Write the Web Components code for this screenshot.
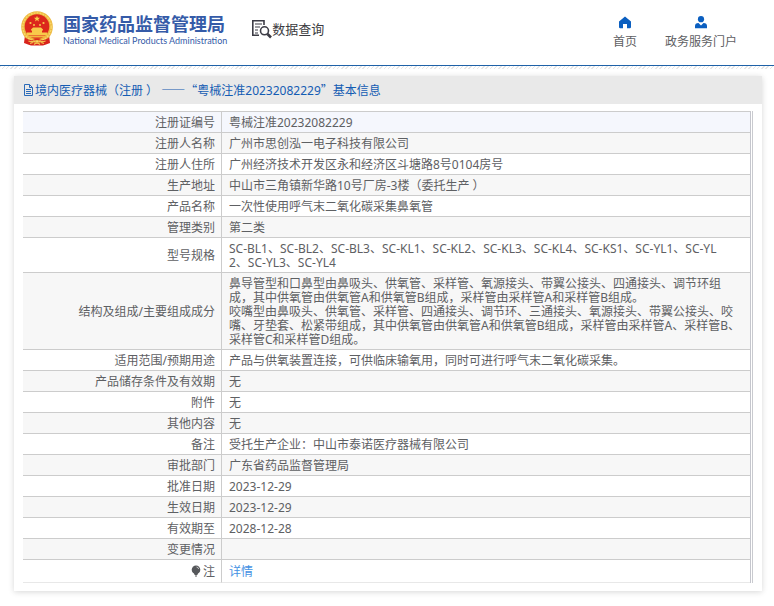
<!DOCTYPE html>
<html lang="zh-CN">
<head>
<meta charset="utf-8">
<title>国家药品监督管理局 数据查询</title>
<style>
body { margin: 0; background: #fff; color: #5e6063; font: 12px/14px "Noto Sans", "Noto Sans CJK SC", sans-serif; }
</style>
</head>
<body>
<site-header>
  <nav-item href="#home" slot="nav"><svg slot="icon" width="14" height="13" viewBox="0 0 14 13"><path fill="#0b5fc0" d="M7 0.600 13 5.500V11q0 1.200-1.200 1.200H9V8H5v4.200H2.200Q1 12.200 1 11V5.500Z"/></svg>首页</nav-item>
  <nav-item href="#portal" slot="nav"><svg slot="icon" width="14" height="13" viewBox="0 0 14 13"><circle cx="7" cy="3.200" r="3.100" fill="#0b5fc0"/><path fill="#0b5fc0" d="M1 12.300V10q0-3 3.500-3L7 9.500 9.500 7Q13 7 13 10v2.300Z"/></svg>政务服务门户</nav-item>
</site-header>
<info-card>
  <span slot="title">境内医疗器械（注册 ） <q-mark>——“</q-mark>粤械注准20232082229<q-mark>”</q-mark>基本信息</span>
  <record-table></record-table>
</info-card>

<script>
function define(name, html, setup) {
  const template = document.createElement('template');
  template.innerHTML = html;
  customElements.define(name, class extends HTMLElement {
    constructor() {
      super();
      this.attachShadow({ mode: 'open' }).append(template.content.cloneNode(true));
    }
    connectedCallback() { if (setup) setup(this, this.shadowRoot); }
  });
}

define('q-mark', `<style>:host { font-family: "Noto Sans CJK SC", sans-serif; }</style><slot></slot>`);

define('state-emblem', `
<style>:host { display: block; width: 34px; height: 36px; } svg { display: block; }</style>
<svg width="34" height="36" viewBox="0 0 34 36" role="img" aria-label="国徽">
  <path d="M5 24 4 32l4 1.500L11 34.500h12l3-1L30 32l-1-8Z" fill="#d8231c"/>
  <circle cx="17" cy="16" r="15.800" fill="#edb83e"/>
  <circle cx="17" cy="16" r="14.200" fill="none" stroke="#f7d56a" stroke-width="1.500" stroke-dasharray="2 1"/>
  <circle cx="17" cy="15.500" r="12.300" fill="#dc261c"/>
  <path fill="#f8d34c" d="m17 4.700.8 2.100h2.200l-1.700 1.400.6 2.200-1.900-1.300-1.900 1.300.6-2.200L14 6.800h2.200Z"/>
  <g fill="#f8c94a"><circle cx="10.500" cy="12" r="1.100"/><circle cx="14" cy="14" r="1"/><circle cx="20" cy="14" r="1"/><circle cx="23.500" cy="12" r="1.100"/>
  <path d="M11 18.500 13 16.500h8l2 2v1h-1v2h5v3H7v-3h5v-2h-1Z"/></g>
  <path d="M8 25h18v1.500H8Z" fill="#f3b73e"/>
  <path d="M6 27q5 3.500 8 1.500 3-2 6 0 3 2 8-1.500l-1 3q-4 2-7 0-3-2-6 0-3 2-7 0Z" fill="#da2b20"/>
  <path d="M8.500 30q3.500 1.500 6-.5M25.500 30q-3.500 1.500-6-.5M10 32.500l3-1M24 32.500l-3-1M14 33.500q3-3 6 0" stroke="#f3c04c" stroke-width="1.300" fill="none"/>
</svg>`);

define('nav-item', `
<style>
:host { display: block; }
a { display: flex; flex-direction: column; align-items: center; gap: 5px; color: inherit; text-decoration: none; line-height: 16px; }
::slotted(svg) { display: block; }
</style>
<a><slot name="icon"></slot><span><slot></slot></span></a>`, (host, root) => {
  root.querySelector('a').href = host.getAttribute('href');
});

define('site-header', `
<style>
:host { display: block; background: #fff; border-bottom: 1px solid #1f62a8; }
header { display: flex; align-items: flex-start; padding: 11px 37px 0 20px; min-height: 54px; }
.brand { display: flex; gap: 9px; color: #355ba8; text-decoration: none; }
.name { display: flex; flex-direction: column; padding-top: 1px; }
.name b { font-size: 18px; line-height: 22px; font-family: "Noto Sans CJK SC", sans-serif; }
.name small { font: 400 9px/14px Lato, sans-serif; }
.query { display: flex; align-items: center; margin: 7px 0 0 24px; color: #3b3b40; font-size: 13px; line-height: 20px; font-weight: 400; }
nav { display: flex; gap: 28px; margin: 5px 0 0 auto; }
h2 { margin: 0; }
</style>
<header>
  <a class="brand" href="#nmpa"><state-emblem></state-emblem><span class="name"><b>国家药品监督管理局</b><small>National Medical Products Administration</small></span></a>
  <h2 class="query"><svg width="21" height="21" viewBox="0 0 21 21" fill="none" stroke="#3c3c46" stroke-width="1.600"><path d="M8 17.200H1.800V2.800H13V7"/><path d="M4 6h7M4 9h5M4 12h3M4 15h3" stroke-width="1.100"/><circle cx="13.500" cy="12.800" r="4"/><path d="m16.500 16 3.500 3.500" stroke-width="2.600"/></svg>数据查询</h2>
  <nav><slot name="nav"></slot></nav>
</header>`);

define('info-card', `
<style>
:host { display: block; padding: 10px 12px 14px 14px; background: repeating-linear-gradient(135deg, #e6e6e6 0 1px, #fff 1px 3px) top / 100% 3px no-repeat; }
section { background: #fff; box-shadow: 0 1px 6px rgba(0,0,0,.16); }
h1 { display: flex; align-items: center; margin: 0; padding: 0 9px; height: 28px; background: #e9e9e9; color: #145cb3; font-size: 12px; font-weight: 400; }
svg { margin-right: 1px; }
.body { padding: 7px 9px 8px; }
</style>
<section>
  <h1><svg width="11" height="12" viewBox="0 0 11 12" fill="none" stroke="#2b6bb8"><path d="M1.500.5h5l3 3v8h-8ZM6.500.5v3h3M3 5.500h5M3 7.500h5M3 9.500h5"/></svg><slot name="title"></slot></h1>
  <div class="body"><slot></slot></div>
</section>`);

const records = [
  ['注册证编号', '粤械注准20232082229'],
  ['注册人名称', '广州市思创泓一电子科技有限公司'],
  ['注册人住所', '广州经济技术开发区永和经济区斗塘路8号0104房号'],
  ['生产地址', '中山市三角镇新华路10号厂房-3楼（委托生产 ）'],
  ['产品名称', '一次性使用呼气末二氧化碳采集鼻氧管'],
  ['管理类别', '第二类'],
  ['型号规格', 'SC-BL1、SC-BL2、SC-BL3、SC-KL1、SC-KL2、SC-KL3、SC-KL4、SC-KS1、SC-YL1、SC-YL\n2、SC-YL3、SC-YL4'],
  ['结构及组成/主要组成成分', '鼻导管型和口鼻型由鼻吸头、供氧管、采样管、氧源接头、带翼公接头、四通接头、调节环组成，其中供氧管由供氧管A和供氧管B组成，采样管由采样管A和采样管B组成。\n咬嘴型由鼻吸头、供氧管、采样管、四通接头、调节环、三通接头、氧源接头、带翼公接头、咬嘴、牙垫套、松紧带组成，其中供氧管由供氧管A和供氧管B组成，采样管由采样管A、采样管B、采样管C和采样管D组成。'],
  ['适用范围/预期用途', '产品与供氧装置连接，可供临床输氧用，同时可进行呼气末二氧化碳采集。'],
  ['产品储存条件及有效期', '无'],
  ['附件', '无'],
  ['其他内容', '无'],
  ['备注', '受托生产企业：中山市泰诺医疗器械有限公司'],
  ['审批部门', '广东省药品监督管理局'],
  ['批准日期', '2023-12-29'],
  ['生效日期', '2023-12-29'],
  ['有效期至', '2028-12-28'],
  ['变更情况', '']
];

define('record-table', `
<style>
:host { display: block; border-right: 1px solid #c9cacf; padding-right: 1px; }
table { width: 100%; border-collapse: separate; border-spacing: 0; border-top: 1px solid #ccc; border-right: 1px solid #c5c6cd; table-layout: fixed; }
col:first-child { width: 199px; }
th, td { padding: 4px 6px 2px; height: 14px; line-height: 14px; font-weight: 400; border-bottom: 1px solid #ccc; }
th { text-align: right; border-right: 1px solid #ccc; }
td { padding-left: 7px; text-align: left; word-break: break-all; white-space: pre-line; }
tr:nth-child(even) { background: #f7f7f7; }
tr:first-child { background: #f5f7fd; }
tr:last-child { background: #fff; }
tr:last-child > * { height: 16px; border-bottom-color: #e8e8e8; }
a { color: #4591e3; text-decoration: none; }
svg { vertical-align: -1px; margin-right: 2px; }
</style>
<table><colgroup><col><col></colgroup><tbody>
<tr><th scope="row"><svg width="10" height="12" viewBox="0 0 10 12"><circle cx="5" cy="4.800" r="4.300" fill="#56585b"/><path d="M3 8h4l-.6 2H3.600ZM4 10.500h2v1H4Z" fill="#56585b"/><path d="M5.500 2q1.800.2 2.200 2" fill="none" stroke="#ddd" stroke-width=".8"/></svg>注</th><td><a href="#detail">详情</a></td></tr>
</tbody></table>`, (host, root) => {
  const last = root.querySelector('tr');
  for (const [label, value] of records) {
    const row = document.createElement('tr');
    const th = document.createElement('th');
    const td = document.createElement('td');
    th.scope = 'row';
    th.textContent = label;
    td.textContent = value;
    row.append(th, td);
    last.before(row);
  }
});
</script>
</body>
</html>
